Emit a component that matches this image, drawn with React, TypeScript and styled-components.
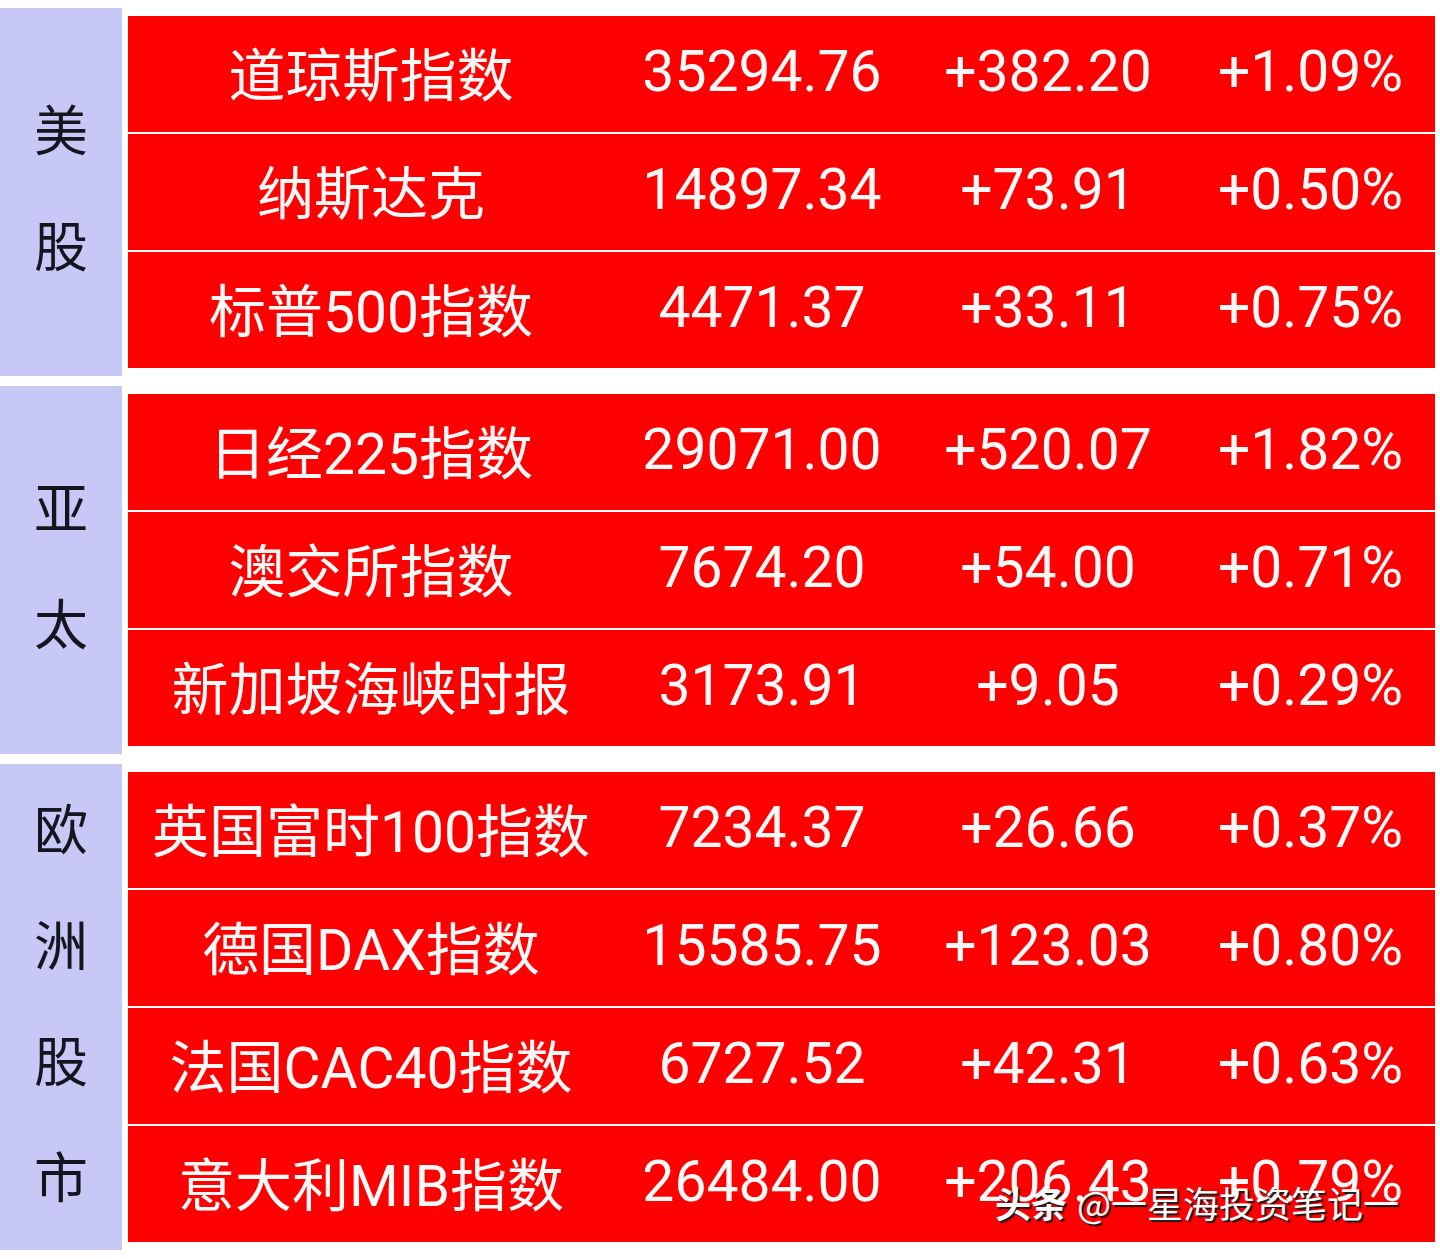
import React from "react";
import styled, { createGlobalStyle } from "styled-components";

const GlobalStyle = createGlobalStyle`
  html, body {
    margin: 0;
    padding: 0;
    background: #ffffff;
  }
`;

const Page = styled.div`
  position: relative;
  width: 1440px;
  height: 1259px;
  padding-top: 8px;
  box-sizing: border-box;
  display: flex;
  flex-direction: column;
  gap: 10px;
  font-family: Roboto, "Noto Sans CJK SC", sans-serif;
`;

const Group = styled.div`
  display: flex;
  gap: 6px;
  padding-right: 5px;
`;

const Label = styled.div`
  width: 122px;
  flex-shrink: 0;
  box-sizing: border-box;
  padding-bottom: 12px;
  background: #c8c8f6;
  display: flex;
  flex-direction: column;
  align-items: center;
  justify-content: center;
  font-family: "Noto Sans CJK SC", sans-serif;
  font-size: 54px;
  line-height: 116px;
  color: #151520;
`;

const Table = styled.div`
  flex: 1;
  margin: 8px 0;
  display: flex;
  flex-direction: column;
  gap: 2px;
`;

const Row = styled.div`
  height: 116px;
  box-sizing: border-box;
  padding-bottom: 6px;
  background: #fe0000;
  display: grid;
  grid-template-columns: 486px 296px 276px 1fr;
  align-items: center;
  color: #fff8f8;
`;

const Cell = styled.div<{ $cjk?: boolean }>`
  text-align: center;
  white-space: nowrap;
  font-size: 57px;
  font-family: ${(p) =>
    p.$cjk ? `Roboto, "Noto Sans CJK SC", sans-serif` : `Roboto, sans-serif`};
`;

const Watermark = styled.div`
  position: absolute;
  left: 995px;
  top: 1177px;
  font-family: "Noto Sans CJK SC", sans-serif;
  font-size: 36px;
  line-height: 50px;
  color: #ffffff;
  text-shadow: 2px 2px 1px #1a1a1a;
  white-space: nowrap;
`;

const Brand = styled.span`
  font-weight: 700;
  margin-right: 10px;
`;

type Item = [string, string, string, string];

const groups: { label: string; rows: Item[] }[] = [
  {
    label: "美股",
    rows: [
      ["道琼斯指数", "35294.76", "+382.20", "+1.09%"],
      ["纳斯达克", "14897.34", "+73.91", "+0.50%"],
      ["标普500指数", "4471.37", "+33.11", "+0.75%"],
    ],
  },
  {
    label: "亚太",
    rows: [
      ["日经225指数", "29071.00", "+520.07", "+1.82%"],
      ["澳交所指数", "7674.20", "+54.00", "+0.71%"],
      ["新加坡海峡时报", "3173.91", "+9.05", "+0.29%"],
    ],
  },
  {
    label: "欧洲股市",
    rows: [
      ["英国富时100指数", "7234.37", "+26.66", "+0.37%"],
      ["德国DAX指数", "15585.75", "+123.03", "+0.80%"],
      ["法国CAC40指数", "6727.52", "+42.31", "+0.63%"],
      ["意大利MIB指数", "26484.00", "+206.43", "+0.79%"],
    ],
  },
];

export default function App() {
  return (
    <>
      <GlobalStyle />
      <Page>
        {groups.map((g) => (
          <Group key={g.label}>
            <Label>
              {g.label.split("").map((ch, i) => (
                <span key={i}>{ch}</span>
              ))}
            </Label>
            <Table>
              {g.rows.map((r) => (
                <Row key={r[0]}>
                  <Cell $cjk>{r[0]}</Cell>
                  <Cell>{r[1]}</Cell>
                  <Cell>{r[2]}</Cell>
                  <Cell>{r[3]}</Cell>
                </Row>
              ))}
            </Table>
          </Group>
        ))}
        <Watermark>
          <Brand>头条</Brand>@一星海投资笔记一
        </Watermark>
      </Page>
    </>
  );
}
